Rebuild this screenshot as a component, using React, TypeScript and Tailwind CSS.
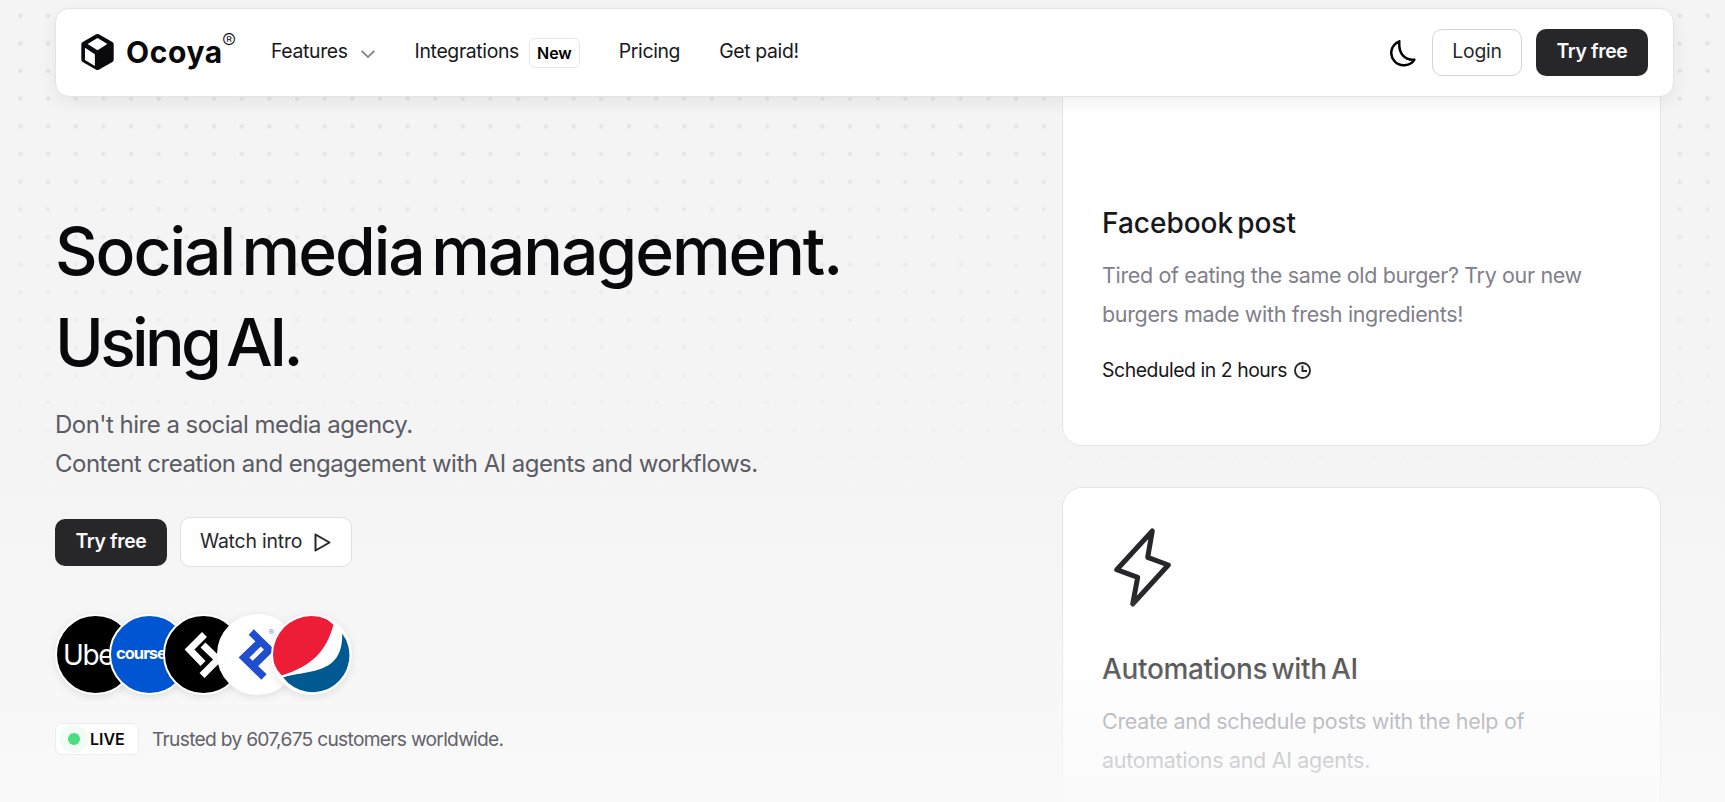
const avatar = "flex size-[81px] shrink-0 items-center overflow-hidden rounded-full border-2 border-white shadow-[0_2px_8px_rgba(0,0,0,0.1)]";

function Cube() {
  return (
    <svg className="-mt-0.5 h-9 w-[33px]" viewBox="0 0 98 109">
      <path d="M49 8 90 31V78L49 101 8 78V31Z" fill="#09090b" stroke="#09090b" strokeWidth="16" strokeLinejoin="round" />
      <path d="M49 12 79 30 49 49 19 30ZM11 42 41 61V97L11 79Z" fill="#fff" />
    </svg>
  );
}

function Header() {
  return (
    <header className="absolute top-2 left-[55px] z-20 flex h-[89px] w-[1619px] items-center rounded-[14px] border border-[#e4e4e6] bg-white px-[25px] text-[19.4px] tracking-[-0.018em] text-[#18181b] shadow-[0_6px_18px_rgba(0,0,0,0.06)]">
      <Cube />
      <span className="ml-[12px] w-[96px] text-[30px] font-bold tracking-[0.02em] text-[#09090b]">Ocoya</span>
      <span className="mb-[22px] w-3 text-[21px] leading-none font-light tracking-normal">®</span>
      <nav className="mb-px flex flex-1 items-center">
        <a className="ml-[37px]">Features</a>
        <svg className="mt-[3px] ml-[13px] h-2 w-[14px]" viewBox="0 0 14 8" fill="none" stroke="#777" strokeWidth="1.6">
          <path d="M.7.9 7 7 13.300.9" />
        </svg>
        <a className="ml-10">Integrations</a>
        <span className="mt-px ml-[10px] rounded-md border border-[#e8e8ea] px-[7px] text-base leading-7 font-semibold tracking-normal text-black">New</span>
        <a className="ml-[39px]">Pricing</a>
        <a className="ml-[39px]">Get paid!</a>
      </nav>
      <svg className="mr-4 h-7 w-[26px]" viewBox="18 18 78 84" fill="none" stroke="#000" strokeWidth="7.5" strokeLinejoin="round">
        <path d="M46 25C20 36 15 65 31 84C47 103 80 100 91 80C62 82 43 62 46 25Z" />
      </svg>
      <button className="h-[47px] w-[90px] rounded-[10px] border border-[#d4d4d8] pb-0.5 tracking-[-0.012em] text-[#27272a]">Login</button>
      <button className="ml-[14px] h-[47px] w-[112px] rounded-[10px] bg-[#27272a] pb-0.5 font-semibold text-[#fafafa]">Try free</button>
    </header>
  );
}

function Brands() {
  return (
    <div className="mt-[47px] flex -space-x-[27px]">
      <div className={`${avatar} bg-black`}>
        <span className="ml-[6px] text-[28px] tracking-[-0.05em] text-white">Ube</span>
      </div>
      <div className={`${avatar} bg-[#0056d2]`}>
        <span className="mb-0.5 ml-[5px] text-[16.5px] font-bold tracking-[-0.06em] text-white">course</span>
      </div>
      <div className={`${avatar} bg-black`}>
        <svg className="size-[77px]" viewBox="0 0 77 77" fill="none" stroke="#fff" strokeWidth="7">
          <path d="M39.500 18.500 24.500 33.500 38 47.500M38 29 53 43.500 37 59.500" />
        </svg>
      </div>
      <div className={`${avatar} bg-white`}>
        <svg className="size-[77px]" viewBox="0 0 77 77">
          <path d="M32.300 16 50.300 33.700 34.300 49.500M41 26 25 41.600 45 61" fill="none" stroke="#204ecf" strokeWidth="7.5" />
          <text x="49.5" y="19" fontSize="8" fill="#6f8fe0">®</text>
        </svg>
      </div>
      <div className={`${avatar} bg-white`}>
        <svg className="size-[77px]" viewBox="-1 -1 79 79">
          <path d="M8 60A37 37 0 0 1 61 8C54 34 40 50 8 60Z" fill="#ed1c37" />
          <path d="M9.500 62C35 54 71 60 70 17A37 37 0 0 1 9.500 62Z" fill="#005a92" />
        </svg>
      </div>
    </div>
  );
}

function Hero() {
  return (
    <section className="relative z-10 w-[900px] pt-[206px] pl-[55px]">
      <h1 className="text-[66px] leading-[91px] font-medium tracking-[-0.031em] [word-spacing:-8px] text-[#09090b]">
        Social media management.
        <br />
        <span className="tracking-[-0.056em] [word-spacing:-6px]">Using AI.</span>
      </h1>
      <p className="mt-[17px] text-[24px] leading-[39px] tracking-[-0.0215em] text-[#5b5b64]">
        Don't hire a social media agency.
        <br />
        Content creation and engagement with AI agents and workflows.
      </p>
      <div className="mt-[34px] flex h-[50px] items-center text-[19.4px] tracking-[-0.01em]">
        <button className="h-[47px] w-[112px] rounded-[10px] bg-[#27272a] pb-px font-semibold tracking-[-0.018em] text-[#fafafa]">Try free</button>
        <button className="ml-[13px] flex h-[50px] w-[172px] items-center rounded-[10px] border border-[#e0e0e3] bg-white pb-px pl-[19px] text-[#27272a]">
          Watch intro
          <svg className="mt-0.5 ml-[12px] h-[19px] w-[17px]" viewBox="0 0 17 19" fill="none" stroke="#27272a" strokeWidth="2" strokeLinejoin="round">
            <path d="M1.500 1.500 15.500 9.500 1.500 17.500Z" />
          </svg>
        </button>
      </div>
      <Brands />
      <div className="mt-7 flex items-center">
        <span className="flex h-8 w-[84px] items-center rounded-[7px] border border-[#ededef] bg-white pl-1 text-base font-semibold text-[#09090b]">
          <i className="mr-0.5 grid size-7 place-items-center rounded-full bg-[#f0fcf4]">
            <b className="size-3 rounded-full bg-[#4ade80]" />
          </i>
          LIVE
        </span>
        <span className="ml-[13px] text-[19.2px] tracking-[-0.037em] text-[#62626a]">Trusted by 607,675 customers worldwide.</span>
      </div>
    </section>
  );
}

function Cards() {
  return (
    <section className="relative ml-auto h-[802px] w-[599px] overflow-hidden pt-10">
      <article className="h-[406px] rounded-[20px] border border-[#e4e4e6] bg-white px-[39px] pt-[164px]">
        <h2 className="text-[28px] leading-9 font-medium [word-spacing:-3.5px] text-[#18181b]">Facebook post</h2>
        <p className="mt-[15px] text-[21.5px] leading-[39px] tracking-[-0.0165em] text-[#80808a]">
          Tired of eating the same old burger? Try our new
          <br />
          burgers made with fresh ingredients!
        </p>
        <p className="mt-[22px] flex items-center text-[19.4px] tracking-[-0.023em] text-[#18181b]">
          Scheduled in 2 hours
          <svg className="ml-[7px] size-[17px]" viewBox="0 0 17 17" fill="none" stroke="#27272a" strokeWidth="1.9">
            <circle cx="8.5" cy="8.5" r="7.5" />
            <path d="M8.500 3.500V9H13" />
          </svg>
        </p>
      </article>
      <article className="mt-[41px] h-[420px] rounded-[20px] border border-[#e4e4e6] bg-white px-[39px] pt-[37px]">
        <svg className="ml-[10px] h-[84px] w-[62px]" viewBox="0 0 62 84" fill="none" stroke="#27272a" strokeWidth="5" strokeLinejoin="round">
          <path d="M40.300 6 35.700 32.300 56.300 40 20.700 79 25.700 52.300 4.700 44.700Z" />
        </svg>
        <h2 className="mt-[42px] text-[28px] leading-9 font-medium tracking-[-0.012em] [word-spacing:-3px] text-[#18181b]">Automations with AI</h2>
        <p className="mt-[15px] text-[21.5px] leading-[39px] tracking-[-0.0145em] text-[#80808a]">
          Create and schedule posts with the help of
          <br />
          automations and AI agents.
        </p>
      </article>
      <div className="absolute inset-x-0 top-[590px] h-[260px] bg-linear-to-b from-[#fafafa]/0 to-[#fafafa]" />
    </section>
  );
}

export default function App() {
  return (
    <main className="relative flex h-[802px] overflow-hidden bg-[linear-gradient(#f4f4f5,#f4f4f4_460px,#f9f9f9_800px)] pr-16 font-['Inter',sans-serif]">
      <div className="absolute inset-0 [mask-image:linear-gradient(#000,#000_80px,transparent_500px)] bg-[radial-gradient(circle,#e2e2e4_1.9px,transparent_2.4px)] bg-[length:27.67px_27.67px] bg-position-[6.6px_1.9px]" />
      <Header />
      <Hero />
      <Cards />
    </main>
  );
}
